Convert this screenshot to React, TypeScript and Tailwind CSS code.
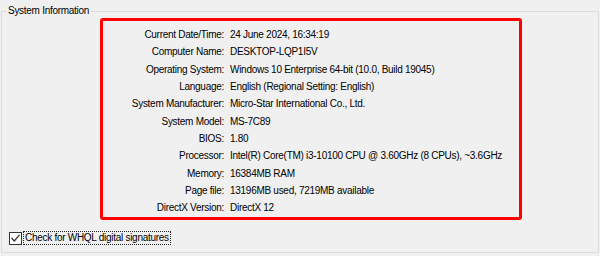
const rows: [string, string][] = [
  ["Current Date/Time:", "24 June 2024, 16:34:19"],
  ["Computer Name:", "DESKTOP-LQP1I5V"],
  ["Operating System:", "Windows 10 Enterprise 64-bit (10.0, Build 19045)"],
  ["Language:", "English (Regional Setting: English)"],
  ["System Manufacturer:", "Micro-Star International Co., Ltd."],
  ["System Model:", "MS-7C89"],
  ["BIOS:", "1.80"],
  ["Processor:", "Intel(R) Core(TM) i3-10100 CPU @ 3.60GHz (8 CPUs), ~3.6GHz"],
  ["Memory:", "16384MB RAM"],
  ["Page file:", "13196MB used, 7219MB available"],
  ["DirectX Version:", "DirectX 12"],
];

const CheckMark = () => (
  <svg width="9" height="8" viewBox="0 0 9 8" fill="none">
    <path d="M0.5 4 L3.3 7 L8.5 0.8" stroke="#333" strokeWidth="1.3" />
  </svg>
);

export default function App() {
  return (
    <div
      className="w-[600px] h-[256px] bg-[#f0f0f0] text-[10px] tracking-[-0.28px] text-black pt-[11px] pl-[1px]"
      style={{ fontFamily: '"Liberation Sans", Arial, sans-serif' }}
    >
      {/* group box */}
      <div className="relative w-[598px] h-[242px] border border-[#dcdcdc] flex flex-col">
        <span className="absolute -top-[7px] left-[4px] px-[2px] bg-[#f0f0f0] leading-[12px]">
          System Information
        </span>

        {/* highlighted info table */}
        <div className="ml-[98px] mt-[6px] w-[422px] h-[202px] border-[3px] border-[#ff0000] rounded-[3px] pt-[5px]">
          {rows.map(([label, value]) => (
            <div key={label} className="flex items-center h-[17.3px]">
              <div className="w-[121px] text-right shrink-0">{label}</div>
              <div className="pl-[6px] whitespace-nowrap">{value}</div>
            </div>
          ))}
        </div>

        {/* checkbox */}
        <label className="flex items-center mt-[11px] ml-[7px]">
          <span className="w-[13px] h-[13px] border border-[#333] bg-white flex items-center justify-center">
            <CheckMark />
          </span>
          <span className="ml-[1px] px-[1px] border border-dotted border-[#222] leading-[12px]">
            Check for WHQL digital signatures
          </span>
        </label>
      </div>
    </div>
  );
}
